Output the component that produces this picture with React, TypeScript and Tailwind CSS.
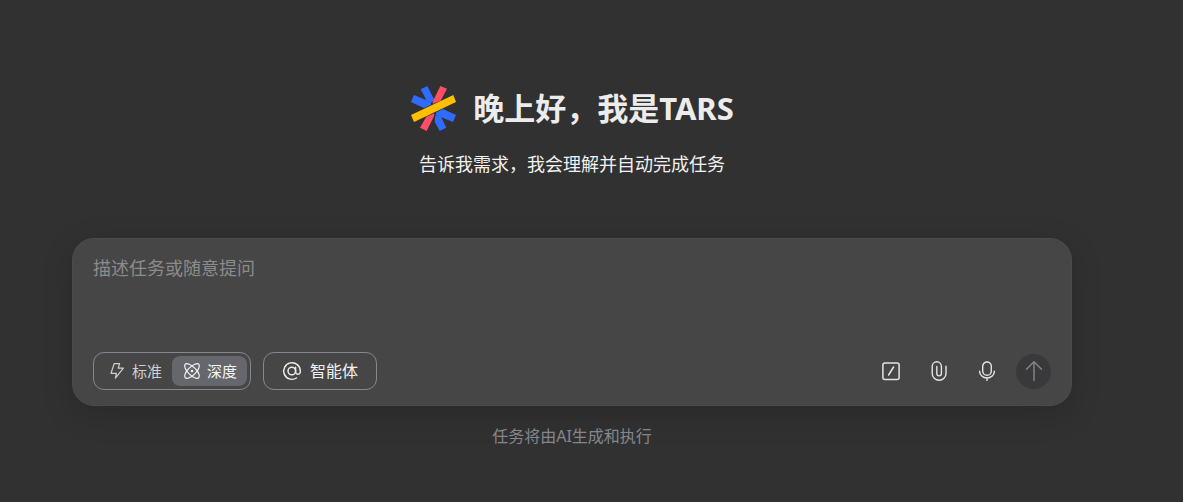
import { useState } from 'react';

const iconProps = {
  fill: 'none',
  stroke: 'currentColor',
  strokeLinecap: 'round' as const,
  strokeLinejoin: 'round' as const,
  'aria-hidden': true,
};

function Logo() {
  return (
    <svg viewBox="30 27 141 141" className="size-[47px] shrink-0" aria-hidden="true">
      <g fill="#2f6bff">
        <path d="M62 40 82 30 103 72 94 79 80 74Z" />
        <path d="M42 57 94 79 92 87 72 96 33 78Z" />
        <path d="M139 155 119 165 104 137 106 118 122 121Z" />
        <path d="M159 138 107 117 109 109 129 99 168 117Z" />
      </g>
      <g fill="#ff4f67">
        <path d="M121 30 141 38 122 74 98 83 98 77Z" />
        <path d="M80 165 60 155 79 122 103 112 102 121Z" />
      </g>
      <path fill="#ffbe00" d="M33 117 160 57 168 78 42 138Z" />
    </svg>
  );
}

function BoltIcon() {
  return (
    <svg {...iconProps} viewBox="0 0 18 18" strokeWidth="1.2" className="size-[18px]">
      <path d="M6.2 1.6H11.6L10.2 6.2H15.4L7.4 16.2 8.4 11.3H3Z" />
    </svg>
  );
}

function AtomIcon() {
  return (
    <svg {...iconProps} viewBox="0 0 18 18" strokeWidth="1.2" className="size-[18px]">
      <ellipse cx="9" cy="9" rx="9.6" ry="4" transform="rotate(45 9 9)" />
      <ellipse cx="9" cy="9" rx="9.6" ry="4" transform="rotate(-45 9 9)" />
      <circle cx="9" cy="9" r="1.3" fill="currentColor" stroke="none" />
    </svg>
  );
}

function AtIcon() {
  return (
    <svg {...iconProps} viewBox="0 0 20 20" strokeWidth="1.4" className="size-5">
      <circle cx="9.8" cy="10" r="3.8" />
      <path d="M13.6 6.2V11.4a2.4 2.4 0 0 0 4.7 0V10a8.3 8.3 0 1 0-3.8 7" />
    </svg>
  );
}

function SlashIcon() {
  return (
    <svg {...iconProps} viewBox="0 0 20 20" strokeWidth="1.5" className="size-5">
      <rect x="1.9" y="1.9" width="16.2" height="16.6" rx="2" />
      <path d="M12.6 6 7.6 14" />
    </svg>
  );
}

function ClipIcon() {
  return (
    <svg {...iconProps} viewBox="0 0 20 20" strokeWidth="1.4" className="size-5">
      <path d="M17 5.2V12.4a6.7 6.7 0 0 1-13.8 0V5.4a4.6 4.6 0 0 1 9.2 0V12.6a2.3 2.3 0 0 1-4.6 0V5.4" />
    </svg>
  );
}

function MicIcon() {
  return (
    <svg {...iconProps} viewBox="0 0 20 20" strokeWidth="1.4" className="size-5">
      <rect x="5.7" y="1" width="8.6" height="13.2" rx="4.3" />
      <path d="M2.6 10.2a7.4 6.8 0 0 0 14.8 0M10 17v2.4" />
    </svg>
  );
}

function ArrowIcon() {
  return (
    <svg {...iconProps} viewBox="0 0 20 22" strokeWidth="1.4" className="h-[22px] w-5">
      <path d="M10 20.5V1.8M2.5 9.2 10 1.8l7.5 7.4" />
    </svg>
  );
}

const modes = [
  { id: 'standard', label: '标准', Icon: BoltIcon },
  { id: 'deep', label: '深度', Icon: AtomIcon },
];

const tools = [
  { label: '快捷指令', Icon: SlashIcon },
  { label: '添加附件', Icon: ClipIcon },
  { label: '语音输入', Icon: MicIcon },
];

export default function App() {
  const [mode, setMode] = useState('deep');
  const [prompt, setPrompt] = useState('');

  return (
    <main className="flex min-h-screen flex-col items-center bg-[#313131] pt-[84px] pr-[39px] pb-8 font-['Noto_Sans','Noto_Sans_CJK_SC',sans-serif]">
      <header className="flex flex-col items-center">
        <div className="flex items-center gap-4">
          <Logo />
          <h1 className="text-[31px] leading-[48px] font-bold text-[#ececec]">晚上好，我是TARS</h1>
        </div>
        <p className="mt-[18px] text-[18px] leading-7 text-[#f2f2f2]">告诉我需求，我会理解并自动完成任务</p>
      </header>

      <div className="mt-[60px] w-full max-w-[1040px] px-5">
        <form
          onSubmit={(event) => event.preventDefault()}
          className="flex flex-col rounded-[22px] border border-[#4b4b4b] bg-[#464646] px-5 pt-[15px] pb-[15px] shadow-[0_8px_32px_rgba(0,0,0,0.16)]"
        >
          <textarea
            aria-label="任务描述"
            value={prompt}
            onChange={(event) => setPrompt(event.target.value)}
            placeholder="描述任务或随意提问"
            className="block h-[98px] w-full resize-none bg-transparent text-[18px] leading-7 text-[#ececec] outline-none placeholder:text-[#8c8c8c]"
          />
          <div className="flex items-center justify-between">
            <div className="flex items-center gap-3">
              <div className="flex h-[38px] items-center rounded-[11px] border border-[#85888f] px-[3px]">
                {modes.map(({ id, label, Icon }) => (
                  <button
                    key={id}
                    type="button"
                    aria-pressed={mode === id}
                    onClick={() => setMode(id)}
                    className={
                      mode === id
                        ? 'flex h-[30px] items-center gap-[6px] rounded-lg bg-[#65676c] pr-[10px] pl-[11px] text-[15px] text-[#f5f5f5]'
                        : 'flex h-[30px] items-center gap-[6px] rounded-lg pr-[10px] pl-[11px] text-[15px] text-[#cfcfcf]'
                    }
                  >
                    <Icon />
                    <span>{label}</span>
                  </button>
                ))}
              </div>
              <button
                type="button"
                className="flex h-[38px] items-center gap-2 rounded-[11px] border border-[#85888f] px-[18px] text-base text-[#f0f0f0]"
              >
                <AtIcon />
                <span>智能体</span>
              </button>
            </div>
            <div className="flex items-center gap-[15px]">
              <div className="flex items-center gap-5">
                {tools.map(({ label, Icon }) => (
                  <button
                    key={label}
                    type="button"
                    aria-label={label}
                    className="flex size-7 items-center justify-center text-[#e4e4e4]"
                  >
                    <Icon />
                  </button>
                ))}
              </div>
              <button
                type="submit"
                aria-label="发送"
                className="flex size-[35px] items-center justify-center rounded-full bg-[#39393b] text-[#85878e]"
              >
                <ArrowIcon />
              </button>
            </div>
          </div>
        </form>
      </div>

      <p className="mt-[18px] text-base leading-6 text-[#85878e]">任务将由AI生成和执行</p>
    </main>
  );
}
